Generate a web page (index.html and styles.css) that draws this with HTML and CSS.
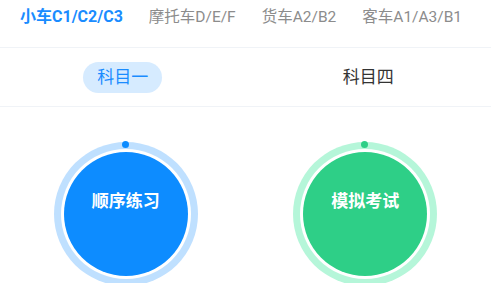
FILE: index.html
```html
<!DOCTYPE html>
<html lang="zh-CN">
<head>
    <meta charset="UTF-8">
    <meta name="viewport" content="width=device-width, initial-scale=1.0">
    <title>驾考练习</title>
    <link rel="stylesheet" href="styles.css">
</head>
<body>
    <div class="car-tabs">
        <div class="car-tab active">小车C1/C2/C3</div>
        <div class="car-tab">摩托车D/E/F</div>
        <div class="car-tab">货车A2/B2</div>
        <div class="car-tab">客车A1/A3/B1</div>
    </div>

    <div class="subject-tabs">
        <div class="subject"><span class="subject-label active">科目一</span></div>
        <div class="subject"><span class="subject-label">科目四</span></div>
    </div>

    <div class="practice">
        <div class="practice-item">
            <div class="ring ring-blue">
                <span class="ring-dot"></span>
                <div class="core">顺序练习</div>
            </div>
        </div>
        <div class="practice-item">
            <div class="ring ring-green">
                <span class="ring-dot"></span>
                <div class="core">模拟考试</div>
            </div>
        </div>
    </div>
</body>
</html>
```

FILE: styles.css
```css
body {
    margin: 0;
    font-family: Roboto, "Noto Sans CJK SC", sans-serif;
    background-color: #fff;
    color: #333;
    overflow: hidden;
}

.car-tabs {
    display: flex;
    gap: 26px;
    height: 48px;
    padding: 6px 0 0 20px;
    box-sizing: border-box;
    border-bottom: 1px solid #f0f3f7;
    white-space: nowrap;
}

.car-tab {
    font-size: 15.5px;
    line-height: 22px;
    color: #8c8c8c;
}

.car-tab.active {
    font-size: 16px;
    color: #1a8cff;
    font-weight: bold;
}

.subject-tabs {
    display: flex;
    height: 58px;
    align-items: center;
    border-bottom: 1px solid #f0f3f7;
}

.subject {
    flex: 1;
    text-align: center;
}

.subject-label {
    display: inline-block;
    font-size: 17px;
    line-height: 31px;
    padding: 0 14px;
    border-radius: 16px;
    color: #333;
}

.subject-label.active {
    background-color: #d6ebff;
    color: #1a8cff;
}

.practice {
    display: flex;
    justify-content: space-around;
    padding: 35px 6px 0;
}

.practice-item {
    flex: 1;
    display: flex;
    justify-content: center;
}

.ring {
    position: relative;
    width: 144px;
    height: 144px;
    padding: 10px;
    box-sizing: border-box;
    border-radius: 50%;
}

.ring-dot {
    position: absolute;
    top: -1px;
    left: 50%;
    width: 7px;
    height: 7px;
    margin-left: -4px;
    border-radius: 50%;
}

.core {
    width: 124px;
    height: 124px;
    border-radius: 50%;
    box-shadow: 0 0 0 3px #fff;
    box-sizing: border-box;
    padding-top: 37px;
    text-align: center;
    font-size: 17px;
    line-height: 24px;
    font-weight: bold;
    color: #fff;
}

.ring-blue {
    background-color: #bfe0ff;
}

.ring-blue .ring-dot,
.ring-blue .core {
    background-color: #0d8cff;
}

.ring-green {
    background-color: #b5f6d9;
}

.ring-green .ring-dot,
.ring-green .core {
    background-color: #2ecf87;
}
```
